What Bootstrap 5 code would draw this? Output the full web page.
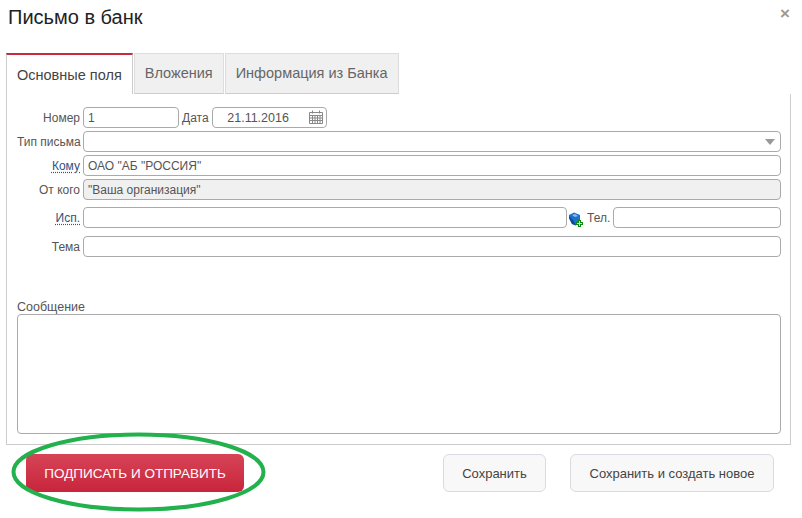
<!DOCTYPE html>
<html lang="ru">
<head>
  <meta charset="UTF-8" />
  <meta name="viewport" content="width=device-width, initial-scale=1.0"/>
  <title>Письмо в банк</title>
  <link href="https://cdn.jsdelivr.net/npm/bootstrap@5.3.3/dist/css/bootstrap.min.css" rel="stylesheet">
  <style>
    body { font-family: "Liberation Sans", Arial, sans-serif; font-size: 12px; color: #555; background: #fff; width: 802px; height: 518px; overflow: hidden; }
    .okno { position: relative; width: 802px; height: 518px; }
    .okno-head { height: 53px; padding: 6px 8px 0 8px; }
    .okno-title { font-size: 20px; line-height: 23px; font-weight: 400; color: #222; margin: 0; }
    .okno-close { font-size: 17px; line-height: 14px; font-weight: 700; color: #999; margin: 1px 4px 0 0; }
    .vkladki { margin-left: 6px; width: 785px; border: 0; flex-wrap: nowrap; height: 41px; }
    .vkladki .nav-link { font-size: 14.5px; line-height: 17px; color: #666; background: #f0f0f0; border: 1px solid #ddd; border-bottom-color: #ccc; border-radius: 0; padding: 11px 10px 11px 10px; margin: 0 1px 0 0; height: 41px; }
    .vkladki .nav-link.active { color: #444; background: #fff; border: 1px solid #ccc; border-top: 2px solid #c9283e; border-bottom: 0; padding: 12px 10px 10px 10px; position: relative; }
    .panel-polya { margin-left: 6px; width: 785px; height: 351px; border: 1px solid #ccc; border-top: 0; padding: 13px 9px 10px 10px; }
    .stroka { display: flex; align-items: center; gap: 3px; height: 21px; margin-bottom: 3px; }
    .stroka-isp { margin-top: 7px; margin-bottom: 8px; }
    .podpis { width: 63px; flex: none; text-align: right; white-space: nowrap; line-height: 14px; }
    .podpis-ssylka { color: #31527f; text-decoration: underline dotted #2a4fa8; text-underline-offset: 2px; }
    .pole { height: 21px; min-height: 21px; font-size: 12px; line-height: 14px; color: #555; padding: 2px 4px; border: 1px solid #aaa; border-radius: 4px; box-shadow: none; }
    .pole:disabled { background: #f0f0f0; color: #555; opacity: 1; }
    .pole-nomer { width: 96px; flex: none; }
    .pole-data { width: 115px; padding: 2px 30px 2px 8px; text-align: center; font-size: 12.5px; }
    .pole-tel { width: 168px; flex: none; }
    .pole-isp { width: 484px; flex: none; }
    .pole-vybor { background-image: url("data:image/svg+xml,%3csvg xmlns='http://www.w3.org/2000/svg' width='10' height='6'%3e%3cpath fill='%23999' d='M0 0h10L5 6z'/%3e%3c/svg%3e"); background-size: 10px 6px; background-position: right 5px center; }
    .kalendar { position: absolute; right: 4px; top: 3px; }
    .znachok { flex: none; margin: 0 0 -3px -1px; }
    .podpis-soob { margin-top: 43px; font-size: 12.5px; line-height: 14px; height: 14px; }
    .pole-tekst { width: 764px; height: 120px; resize: none; }
    .niz { padding: 9px 28px 0 26px; }
    .knopka { height: 38px; font-size: 13px; line-height: 15px; border-radius: 6px; color: #444; padding: 0; background: #f8f8f8; border: 1px solid #d8dce0; }
    .knopka-glav { width: 218px; color: #fff; font-size: 13.5px; border: 0; background: linear-gradient(#d74457, #c8253b); }
    .knopka-glav:hover { color: #fff; }
    .knopka-sohr { width: 103px; margin-right: 24px; }
    .knopka-novoe { width: 204px; }
    .oval-obvod { position: absolute; left: 0; top: 0; pointer-events: none; }
  </style>
</head>
<body>
  <div class="okno">
    <div class="okno-head d-flex justify-content-between align-items-start">
      <h1 class="okno-title">Письмо в банк</h1>
      <span class="okno-close">×</span>
    </div>

    <ul class="nav nav-tabs vkladki">
      <li class="nav-item"><a class="nav-link active" href="#">Основные поля</a></li>
      <li class="nav-item"><a class="nav-link" href="#">Вложения</a></li>
      <li class="nav-item"><a class="nav-link" href="#">Информация из Банка</a></li>
    </ul>

    <div class="panel-polya">
      <div class="stroka">
        <span class="podpis">Номер</span>
        <input class="form-control pole pole-nomer" value="1">
        <span>Дата</span>
        <div class="position-relative">
          <input class="form-control pole pole-data" value="21.11.2016">
          <svg class="kalendar" width="14" height="14" viewBox="0 0 14 14" fill="none" stroke="#888" stroke-width="1">
            <path d="M.5 2.500h13v11H.5zM.5 5.500h13M.5 8h13M.5 10.500h13M3.500 5.500v8M6 5.500v8M8.500 5.500v8M11 5.500v8M3.500 .5v3M10.500 .5v3"/>
          </svg>
        </div>
      </div>
      <div class="stroka">
        <span class="podpis">Тип письма</span>
        <select class="form-select pole pole-vybor flex-fill"><option></option></select>
      </div>
      <div class="stroka">
        <a class="podpis podpis-ssylka" href="#">Кому</a>
        <input class="form-control pole flex-fill" value='ОАО "АБ "РОССИЯ"'>
      </div>
      <div class="stroka">
        <span class="podpis">От кого</span>
        <input class="form-control pole flex-fill" value='"Ваша организация"' disabled>
      </div>
      <div class="stroka stroka-isp">
        <a class="podpis podpis-ssylka" href="#">Исп.</a>
        <input class="form-control pole pole-isp">
        <svg class="znachok" width="15" height="15" viewBox="0 0 15 15">
          <path fill="#1f72cc" d="M0 3 5 .5 11 3v6l-4 4.500L3 12 0 6z"/>
          <path fill="#0b4a94" d="M0 4l4 4 3 5.500L3 12 0 6z"/>
          <path fill="#8fbdea" d="M3 3l3-1 3 2-3 1z"/>
          <path fill="#0a8a12" d="M7 10h2V8h3v2h2v3h-2v2H9v-2H7z"/>
          <path fill="#c4f2ae" d="M8 11h2V9h1v2h2v1h-2v2h-1v-2H8z"/>
        </svg>
        <span>Тел.</span>
        <input class="form-control pole pole-tel">
      </div>
      <div class="stroka">
        <span class="podpis">Тема</span>
        <input class="form-control pole flex-fill">
      </div>
      <div class="podpis-soob">Сообщение</div>
      <textarea class="form-control pole pole-tekst"></textarea>
    </div>

    <div class="niz d-flex">
      <button class="btn knopka knopka-glav me-auto">ПОДПИСАТЬ И ОТПРАВИТЬ</button>
      <button class="btn knopka knopka-sohr">Сохранить</button>
      <button class="btn knopka knopka-novoe">Сохранить и создать новое</button>
    </div>

    <svg class="oval-obvod" width="802" height="518">
      <ellipse cx="138.500" cy="472" rx="125" ry="37.500" fill="none" stroke="#22b14c" stroke-width="4"/>
    </svg>
  </div>
  <script src="https://cdn.jsdelivr.net/npm/bootstrap@5.3.3/dist/js/bootstrap.bundle.min.js"></script>
</body>
</html>
